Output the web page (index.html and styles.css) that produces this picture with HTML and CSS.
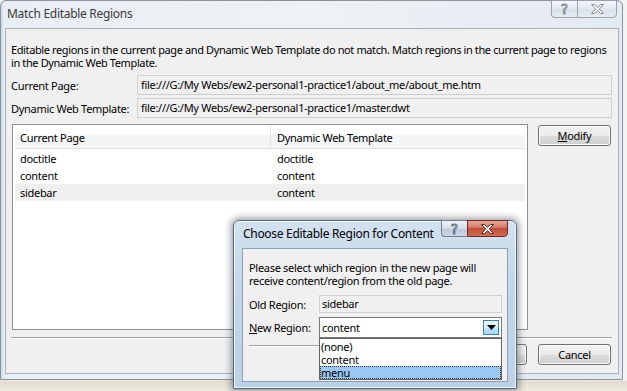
FILE: index.html
```html
<!DOCTYPE html>
<html>
<head>
<meta charset="utf-8">
<link rel="stylesheet" href="styles.css">
</head>
<body>
<div class="win main-win">
  <div class="titlebar">
    <span class="title">Match Editable Regions</span>
    <div class="caps">
      <span class="cap cap-help inactive">?</span>
      <span class="cap cap-close inactive"><svg width="13" height="10" viewBox="0 0 13 10"><polygon points="0.5,0.5 3.5,0.5 6.5,3.3 9.5,0.5 12.5,0.5 8.3,5 12.5,9.5 9.5,9.5 6.5,6.7 3.5,9.5 0.5,9.5 4.7,5" fill="#fdfdfd" stroke="#7f8a97" stroke-width="1"/></svg></span>
    </div>
  </div>
  <div class="client">
    <p class="desc">Editable regions in the current page and Dynamic Web Template do not match. Match regions in the current page to regions<br>in the Dynamic Web Template.</p>
    <div class="fields">
      <span class="lbl">Current Page:</span>
      <div class="field">file:///G:/My Webs/ew2-personal1-practice1/about_me/about_me.htm</div>
      <span class="lbl">Dynamic Web Template:</span>
      <div class="field">file:///G:/My Webs/ew2-personal1-practice1/master.dwt</div>
    </div>
    <div class="main-area">
      <div class="list">
        <div class="lrow lhead">
          <span class="c1">Current Page</span><span class="c2">Dynamic Web Template</span>
        </div>
        <div class="lrow"><span class="c1">doctitle</span><span class="c2">doctitle</span></div>
        <div class="lrow"><span class="c1">content</span><span class="c2">content</span></div>
        <div class="lrow sel"><span class="c1">sidebar</span><span class="c2">content</span></div>
      </div>
      <div class="side">
        <button class="btn"><u>M</u>odify</button>
      </div>
    </div>
    <div class="sep"></div>
    <div class="footer">
      <button class="btn">Update</button>
      <button class="btn">Cancel</button>
    </div>
  </div>
</div>

<div class="win sub-win">
  <div class="titlebar sub-title">
    <span class="title">Choose Editable Region for Content</span>
    <div class="caps">
      <span class="cap cap-help">?</span>
      <span class="cap cap-close red"><svg width="13" height="10" viewBox="0 0 13 10"><polygon points="0.5,0.5 3.5,0.5 6.5,3.3 9.5,0.5 12.5,0.5 8.3,5 12.5,9.5 9.5,9.5 6.5,6.7 3.5,9.5 0.5,9.5 4.7,5" fill="#ffffff" stroke="#5b2a24" stroke-width="1"/></svg></span>
    </div>
  </div>
  <div class="client sub-client">
    <p class="desc">Please select which region in the new page will<br>receive content/region from the old page.</p>
    <div class="sub-fields">
      <span class="lbl">Old Region:</span>
      <div class="field sfield">sidebar</div>
      <span class="lbl"><u>N</u>ew Region:</span>
      <div class="combo">
        <span class="combo-val">content</span>
        <span class="drop"><svg width="9" height="5" viewBox="0 0 9 5"><polygon points="0,0 9,0 4.5,5" fill="#000"/></svg></span>
        <div class="dlist">
          <div class="ditem">(none)</div>
          <div class="ditem">content</div>
          <div class="ditem dsel">menu</div>
        </div>
      </div>
    </div>
    <div class="sep sub-sep"></div>
  </div>
</div>
</body>
</html>
```

FILE: styles.css
```css
* { box-sizing: border-box; }
html, body { margin: 0; padding: 0; }
body {
  width: 627px;
  height: 391px;
  overflow: hidden;
  position: relative;
  background: linear-gradient(#f4f4f4 0, #f4f4f4 380px, #e4dccd 381px, #f0ebe0 391px);
  font-family: "Noto Sans", "Open Sans", sans-serif;
  font-size: 11px;
  letter-spacing: -0.3px;
  color: #000;
  white-space: nowrap;
}
.win {
  display: flex;
  flex-direction: column;
  border: 1px solid #8793a1;
  border-radius: 6px 6px 0 0;
}
.main-win {
  width: 623px;
  height: 380px;
  padding: 0 3px 5px 4px;
  background: linear-gradient(90deg, #c9d6e3 0, #e9eef4 3px, #eef2f6 50%, #e4eaf1 100%);
}
.titlebar {
  height: 27px;
  flex: none;
  display: flex;
  justify-content: space-between;
  align-items: flex-start;
}
.title {
  padding: 5px 0 0 2px;
  line-height: 16px;
  font-size: 12px;
  color: #3a3a3a;
}
.caps {
  display: flex;
  margin-top: -1px;
  margin-right: 2px;
  letter-spacing: 0;
}
.cap {
  height: 18px;
  display: flex;
  align-items: center;
  justify-content: center;
  border: 1px solid #97a3b1;
  background: linear-gradient(#f3f6f9, #e3e9f0 50%, #d8e0e9 51%, #e6ecf2);
}
.cap-help {
  width: 26px;
  border-radius: 0 0 0 4px;
  border-right: none;
  font-size: 14px;
  line-height: 14px;
  color: #fff;
  -webkit-text-stroke: 0.9px #7a8593;
  font-family: "DejaVu Sans", sans-serif;
}
.cap-close {
  width: 40px;
  border-radius: 0 0 4px 0;
}
.client {
  flex: 1;
  background: #f0f0f0;
  border: 1px solid #a7b1bc;
  display: flex;
  flex-direction: column;
  padding: 14px 6px 0 5px;
}
.desc {
  margin: 0;
  line-height: 13px;
  letter-spacing: -0.38px;
}
.fields {
  display: grid;
  grid-template-columns: 126px 1fr;
  row-gap: 3px;
  align-items: center;
  margin-top: 6px;
}
.field {
  height: 20px;
  border: 1px solid #cfcfcf;
  background: #f0f0f0;
  padding-left: 3px;
  line-height: 18px;
  overflow: hidden;
}
.main-area {
  display: flex;
  gap: 10px;
  height: 206px;
  margin: 6px 1px 0 1px;
}
.list {
  width: 516px;
  background: #fff;
  border: 1px solid #8e8f8f;
  padding: 0 2px;
}
.lrow {
  display: flex;
  height: 17px;
  line-height: 17px;
}
.lhead {
  height: 24px;
  line-height: 26px;
  background: linear-gradient(#fff 0, #fff 42%, #f4f5f6 43%, #f4f5f6 100%);
  border-bottom: 1px solid #dcdfe3;
  margin-bottom: 1px;
}
.c1 {
  width: 256px;
  padding-left: 5px;
  flex: none;
}
.lhead .c1 { border-right: 1px solid #e3e5e8; }
.c2 {
  padding-left: 6px;
}
.sel { background: #efefef; }
.side { flex: 1; }
.btn {
  width: 73px;
  height: 21px;
  border: 1px solid #707070;
  border-radius: 3px;
  background: linear-gradient(#f2f2f2 0, #ebebeb 50%, #dddddd 51%, #cfcfcf 100%);
  box-shadow: inset 0 0 0 1px #fcfcfc;
  font-family: "Noto Sans", "Open Sans", sans-serif;
  font-size: 11px;
  letter-spacing: -0.3px;
  color: #000;
  padding: 0;
  line-height: 18px;
  margin-top: 1px;
}
.sep {
  margin-top: 7px;
  border-top: 1px solid #a0a0a0;
  border-bottom: 1px solid #fff;
}
.footer {
  display: flex;
  justify-content: flex-end;
  gap: 11px;
  margin: 4px 1px 0 0;
}

/* Sub dialog */
.sub-win {
  position: absolute;
  left: 233px;
  top: 220px;
  width: 284px;
  height: 169px;
  padding: 0 8px 6px 8px;
  border-color: #55677c;
  background: linear-gradient(#d3e2f1, #c3d6ea 40%, #bcd1e7);
  box-shadow: 0 0 7px 2px rgba(30, 40, 50, 0.45), inset 0 0 0 1px rgba(255,255,255,0.7);
}
.sub-title .title {
  padding: 5px 0 0 1px;
  color: #000;
  font-size: 12px;
}
.sub-title .caps {
  margin-right: 0;
}
.sub-title .cap { height: 17px; }
.sub-title .cap-help {
  border-color: #6f7e90;
  background: linear-gradient(#eef3f8, #d3dde8 50%, #bac8d8 51%, #ccd8e6);
  -webkit-text-stroke: 0.9px #5f6b78;
}
.cap.red {
  width: 41px;
  border-color: #6d2a22;
  background: linear-gradient(#e9a99b, #d27663 45%, #c24d36 50%, #d36e56 100%);
}
.sub-client {
  padding: 12px 5px 0 6px;
  border-color: #8d9fb3;
}
.sub-client .desc { letter-spacing: -0.3px; }
.sub-fields {
  display: grid;
  grid-template-columns: 70px 1fr;
  grid-template-rows: 18px 21px;
  row-gap: 4px;
  align-items: center;
  margin-top: 8px;
}
.sfield {
  height: 18px;
  line-height: 16px;
  padding-left: 2px;
}
.combo {
  position: relative;
  height: 21px;
  background: #fff;
  border: 1px solid #7a7a7a;
  display: flex;
  align-items: center;
  justify-content: space-between;
  padding: 0 2px 0 2px;
}
.combo-val { line-height: 19px; }
.drop {
  width: 16px;
  height: 15px;
  border: 1px solid #3c7fb1;
  background: linear-gradient(#eaf6fd, #d9f0fc 50%, #bee6fd 51%, #a7d9f5);
  display: flex;
  align-items: center;
  justify-content: center;
}
.dlist {
  position: absolute;
  left: -1px;
  right: -1px;
  top: 20px;
  height: 42px;
  background: #fff;
  border: 1px solid #646464;
  padding-top: 1px;
}
.ditem {
  height: 13px;
  line-height: 13px;
  padding-left: 1px;
}
.dsel {
  background: #99c9f2;
  outline: 1px dotted #333;
  outline-offset: -1px;
}
.sub-sep { margin-top: 7px; }
```
